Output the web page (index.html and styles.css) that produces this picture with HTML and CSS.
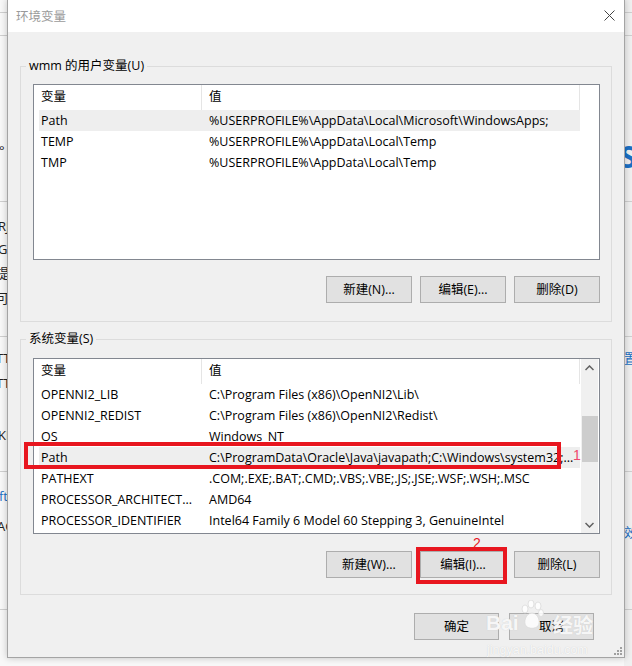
FILE: index.html
```html
<!DOCTYPE html>
<html lang="zh-CN">
<head>
<meta charset="utf-8">
<title>环境变量</title>
<link rel="stylesheet" href="styles.css">
</head>
<body>
<div class="desk">
  <div class="desk-right"></div>
  <div class="rule r1"></div><div class="rule r2"></div><div class="rule r3"></div>
  <div class="rule r4"></div><div class="rule r5"></div><div class="rule r6"></div>
  <span class="frag f-deg">°</span>
  <span class="frag f-r">RJ</span>
  <span class="frag f-g">GE</span>
  <span class="frag f-ti">提示</span>
  <span class="frag f-ke">可用</span>
  <span class="frag f-t1">TT</span>
  <span class="frag f-t2">TT</span>
  <span class="frag f-k">KK</span>
  <span class="frag f-ft blue">ft</span>
  <span class="frag f-a">AG</span>
  <span class="frag f-s blue">S</span>
  <span class="frag f-zhi blue">置</span>
  <span class="frag f-xiao blue">效</span>
</div>

<div class="dialog">
  <div class="titlebar">
    <span class="title">环境变量</span>
    <svg class="close" width="11" height="11" viewBox="0 0 11 11"><path d="M0.5 0.5 L10.5 10.5 M10.5 0.5 L0.5 10.5" stroke="#444" stroke-width="1" fill="none"/></svg>
  </div>
  <div class="content">
    <fieldset class="group">
      <legend>wmm 的用户变量(U)</legend>
      <div class="list">
        <div class="cols">
          <div class="head"><span class="hc1">变量</span><span class="hc2">值</span></div>
          <div class="row sel"><span class="c1">Path</span><span class="c2">%USERPROFILE%\AppData\Local\Microsoft\WindowsApps;</span></div>
          <div class="row"><span class="c1">TEMP</span><span class="c2">%USERPROFILE%\AppData\Local\Temp</span></div>
          <div class="row"><span class="c1">TMP</span><span class="c2">%USERPROFILE%\AppData\Local\Temp</span></div>
        </div>
        <div class="gutter"></div>
      </div>
      <div class="btns">
        <button class="btn">新建(N)...</button>
        <button class="btn">编辑(E)...</button>
        <button class="btn">删除(D)</button>
      </div>
    </fieldset>

    <fieldset class="group group2">
      <legend>系统变量(S)</legend>
      <div class="list">
        <div class="cols">
          <div class="head"><span class="hc1">变量</span><span class="hc2">值</span></div>
          <div class="row"><span class="c1">OPENNI2_LIB</span><span class="c2">C:\Program Files (x86)\OpenNI2\Lib\</span></div>
          <div class="row"><span class="c1">OPENNI2_REDIST</span><span class="c2">C:\Program Files (x86)\OpenNI2\Redist\</span></div>
          <div class="row"><span class="c1">OS</span><span class="c2">Windows_NT</span></div>
          <div class="row sel"><span class="c1">Path</span><span class="c2">C:\ProgramData\Oracle\Java\javapath;C:\Windows\system32;...</span></div>
          <div class="row"><span class="c1">PATHEXT</span><span class="c2">.COM;.EXE;.BAT;.CMD;.VBS;.VBE;.JS;.JSE;.WSF;.WSH;.MSC</span></div>
          <div class="row"><span class="c1">PROCESSOR_ARCHITECT...</span><span class="c2">AMD64</span></div>
          <div class="row"><span class="c1">PROCESSOR_IDENTIFIER</span><span class="c2">Intel64 Family 6 Model 60 Stepping 3, GenuineIntel</span></div>
        </div>
        <div class="vscroll">
          <div class="arrow"><svg width="9" height="6" viewBox="0 0 9 6"><polyline points="0.5,5 4.5,1 8.5,5" fill="none" stroke="#606060" stroke-width="1.5"/></svg></div>
          <div class="track"><div class="thumb"></div></div>
          <div class="arrow"><svg width="9" height="6" viewBox="0 0 9 6"><polyline points="0.5,1 4.5,5 8.5,1" fill="none" stroke="#606060" stroke-width="1.5"/></svg></div>
        </div>
      </div>
      <div class="btns">
        <button class="btn">新建(W)...</button>
        <button class="btn">编辑(I)...</button>
        <button class="btn">删除(L)</button>
      </div>
    </fieldset>

    <div class="footer">
      <button class="btn btn-f">确定</button>
      <button class="btn btn-f">取消</button>
    </div>
  </div>
  <svg class="grip" width="8" height="8" viewBox="0 0 8 8" fill="#a0a0a0">
    <rect x="6" y="0" width="2" height="2"/><rect x="3" y="3" width="2" height="2"/><rect x="6" y="3" width="2" height="2"/>
    <rect x="0" y="6" width="2" height="2"/><rect x="3" y="6" width="2" height="2"/><rect x="6" y="6" width="2" height="2"/>
  </svg>
</div>

<div class="mark box1"></div>
<span class="num n1">1</span>
<div class="mark box2"></div>
<span class="num n2">2</span>

<div class="watermark">
  <span class="wm-bai">Bai</span>
  <svg class="wm-paw" width="24" height="30" viewBox="0 0 24 30">
    <g fill="rgba(255,255,255,0.85)" stroke="#dadada" stroke-width="0.8">
      <ellipse cx="5" cy="9" rx="3" ry="4"/><ellipse cx="11" cy="4" rx="3" ry="4"/><ellipse cx="18" cy="6" rx="3" ry="4"/><ellipse cx="21" cy="13" rx="2.5" ry="3.5"/>
      <path d="M12 13 C6 13 3 22 6 26 C9 29 15 29 18 26 C21 22 18 13 12 13 Z"/>
    </g>
  </svg>
  <span class="wm-jy">经验</span>
  <span class="wm-url">jingyan.baidu.com</span>
</div>
</body>
</html>
```
FILE: styles.css
```css
* { box-sizing: border-box; }
html, body { margin: 0; padding: 0; }
body {
  width: 632px;
  height: 666px;
  overflow: hidden;
  position: relative;
  background: #f8f8f8;
  font-family: "Open Sans", "Noto Sans CJK SC", sans-serif;
  font-size: 12.5px;
  color: #000;
}

/* desktop behind the window */
.desk { position: absolute; inset: 0; }
.desk-right { position: absolute; top: 0; right: 0; bottom: 0; width: 8px; background: #f0f0f0; }
.rule { position: absolute; left: 0; right: 0; height: 1px; background: #cfcfcf; }
.r1 { top: 12px; } .r2 { top: 35px; } .r3 { top: 201px; }
.r4 { top: 336px; } .r5 { top: 471px; } .r6 { top: 609px; }
.frag { position: absolute; font-size: 13px; line-height: 16px; color: #222; }
.frag.blue { color: #1a6fc4; }
.f-deg { left: -1px; top: 142px; }
.f-r { left: -2px; top: 218px; }
.f-g { left: -2px; top: 241px; }
.f-ti { left: -4px; top: 265px; }
.f-ke { left: -4px; top: 290px; }
.f-t1 { left: -4px; top: 350px; }
.f-t2 { left: -4px; top: 375px; }
.f-k { left: -2px; top: 427px; }
.f-ft { left: -1px; top: 488px; }
.f-a { left: -3px; top: 518px; }
.f-s { left: 620px; top: 140px; font-size: 30px; line-height: 34px; font-weight: bold; }
.f-zhi { left: 624px; top: 350px; }
.f-xiao { left: 624px; top: 524px; }

/* window */
.dialog {
  position: absolute;
  left: 7px;
  top: -1px;
  width: 618px;
  height: 659px;
  border: 1px solid #a4a4a4;
  background: #f0f0f0;
  box-shadow: 0 0 7px rgba(0, 0, 0, 0.22);
  display: flex;
  flex-direction: column;
  z-index: 1;
}
.titlebar {
  height: 32px;
  flex: none;
  background: #fff;
  display: flex;
  align-items: center;
  justify-content: space-between;
  padding: 1px 9px 0 8px;
}
.title { color: #9a9a9a; font-size: 12.5px; line-height: 16px; }
.close { display: block; margin-top: -2px; }

.content { padding: 26px 12px 0 12px; display: flex; flex-direction: column; }

.group {
  margin: 0;
  min-width: 0;
  border: 1px solid #dcdcdc;
  padding: 10px 11px 18px 12px;
}
.group2 { margin-top: 9px; padding-top: 11px; padding-bottom: 16px; }
.group legend {
  padding: 0 3px;
  margin-left: -7px;
  line-height: 16px;
  font-size: 12.5px;
}

.list {
  height: 176px;
  border: 1px solid #828790;
  background: #fff;
  display: flex;
  overflow: hidden;
}
.cols { flex: 1; min-width: 0; overflow: hidden; }
.gutter { width: 19px; flex: none; }
.head { height: 25px; display: flex; align-items: stretch; line-height: 24px; }
.hc1 { width: 168px; flex: none; padding-left: 7px; border-right: 1px solid #e5e5e5; }
.hc2 { flex: 1; padding-left: 7px; border-right: 1px solid #e5e5e5; }
.row { height: 21px; margin-left: 5px; display: flex; line-height: 21px; white-space: nowrap; }
.row.sel { background: #eeeeee; }
.c1 { width: 163px; flex: none; padding-left: 2px; overflow: hidden; }
.c2 { flex: 1; padding-left: 7px; overflow: hidden; }

.vscroll {
  width: 17px;
  flex: none;
  margin: 0 1px 0 1px;
  background: #f0f0f0;
  display: flex;
  flex-direction: column;
}
.arrow { height: 17px; flex: none; display: flex; align-items: center; justify-content: center; }
.track { flex: 1; padding-top: 40px; }
.thumb { height: 46px; margin-left: 1px; background: #cdcdcd; }

.btns { display: flex; justify-content: flex-end; gap: 8px; margin-top: 16px; }
.group2 .btns { margin-top: 17px; }
.btn {
  width: 86px;
  height: 27px;
  margin: 0;
  padding: 0;
  border: 1px solid #adadad;
  background: #e1e1e1;
  font-family: inherit;
  font-size: 12.5px;
  color: #000;
  line-height: 25px;
}
.footer { display: flex; justify-content: flex-end; gap: 10px; margin-top: 18px; margin-right: 18px; }
.btn-f { width: 85px; }

.grip { position: absolute; right: 2px; bottom: 2px; }

/* annotations */
.mark { position: absolute; border: 4px solid #e8161f; z-index: 2; }
.box1 { left: 24px; top: 442px; width: 537px; height: 27px; }
.box2 { left: 416px; top: 547px; width: 91px; height: 37px; }
.num { position: absolute; z-index: 2; font-family: "Liberation Sans", sans-serif; font-size: 14px; line-height: 16px; }
.n1 { left: 573px; top: 447px; color: #f0466b; }
.n2 { left: 473px; top: 535px; color: #e8161f; }

.watermark { position: absolute; left: 484px; top: 598px; width: 120px; height: 62px; z-index: 3; color: rgba(255, 255, 255, 0.85); }
.watermark span { position: absolute; text-shadow: 0 0 1px #c8c8c8; white-space: nowrap; }
.wm-bai { left: 2px; top: 13px; font-family: "Liberation Sans", sans-serif; font-weight: bold; font-size: 21px; line-height: 24px; }
.wm-paw { position: absolute; left: 36px; top: 2px; }
.wm-jy { left: 69px; top: 15px; font-family: "Noto Sans CJK SC", sans-serif; font-weight: bold; font-size: 20px; line-height: 24px; }
.wm-url { left: 3px; top: 45px; font-family: "Liberation Sans", sans-serif; font-size: 12.5px; line-height: 14px; }
```
